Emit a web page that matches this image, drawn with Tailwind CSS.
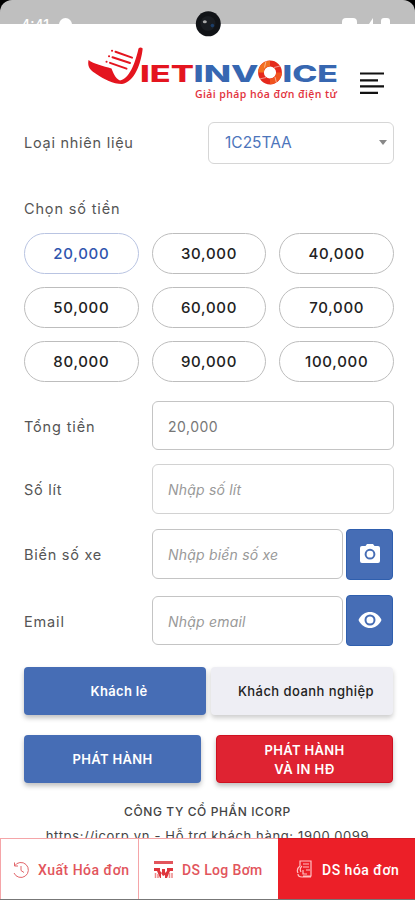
<!DOCTYPE html>
<html lang="vi">
<head>
<meta charset="utf-8">
<meta name="viewport" content="width=device-width, initial-scale=1">
<title>VietInvoice</title>
<script src="https://cdn.jsdelivr.net/npm/@tailwindcss/browser@4"></script>
</head>
<body class="bg-white">
<div class="relative flex h-[900px] w-[415px] flex-col overflow-hidden bg-white font-['Inter','Noto_Sans',sans-serif] text-[14.500px] text-[#555]">
  <!-- status bar -->
  <div class="h-[24px] shrink-0 bg-black">
    <div class="flex h-[24px] items-start justify-between overflow-hidden rounded-t-[12px] bg-[#bfbfbf] pt-[17px] pr-[25px] pl-[21px] text-[14px] leading-[16px] font-medium text-white">
      <div class="flex gap-[10px]"><span>4:41</span><span class="mt-[1px] h-[13px] w-[13px] rounded-full bg-white"></span></div>
      <div class="flex gap-[8px]">
        <span class="mt-[1px] h-[12px] w-[15px] rounded-[4px] bg-white"></span>
        <svg class="mt-[1px] h-[12px] w-[8px]" viewBox="0 0 8 12"><path d="M8 0V12H0z" fill="#fff"/></svg>
        <span class="mt-[1px] h-[12px] w-[9px] rounded-[3px] bg-white"></span>
      </div>
    </div>
  </div>
  <svg class="absolute top-[11px] left-[195px] h-[26px] w-[26px]" viewBox="0 0 26 26"><circle cx="13.3" cy="12.8" r="12.5" fill="#111317"/><circle cx="13" cy="12.5" r="7.5" fill="#1a1d22"/><ellipse cx="9.8" cy="10.8" rx="2" ry="1.5" fill="#aaa"/><circle cx="17.4" cy="14.6" r="1.8" fill="#1c3d68"/></svg>

  <!-- header -->
  <header class="flex h-[98px] shrink-0 pt-[20px] pl-[84px]">
    <svg class="h-[62px] w-[258px] shrink-0" viewBox="84 44 258 62">
      <path d="M88.500 60C94 64 103 66 111.500 68.500C113 72 115 78.500 120 80.500C129 79 135 64 138.500 48.500Q140.500 46.500 142.700 48.500C141 64 134.500 82 122 84C113 84 104 79 97 74.500C91 70.500 87 68 88.500 60Z" fill="#e4151f"/>
      <path d="M90 63L110 69.500L116 81L106 78L94 70Z" fill="#e4151f"/>
      <g stroke="#e4151f" stroke-width="2" stroke-linecap="round" fill="none"><path d="M112 50.800l.1 0M115.500 51.800L132 57.600M109 56.300l.1 0M112.500 57.300L130 63M106.500 61.800l.1 0M110 62.900L126.500 68.600"/></g>
      <g font-family="Inter, sans-serif" font-weight="800" font-size="22.500">
        <text x="140" y="82" textLength="54" lengthAdjust="spacingAndGlyphs" fill="#e4151f">IET</text>
        <text x="193.500" y="82" textLength="65" lengthAdjust="spacingAndGlyphs" fill="#3767b1">INV</text>
        <text x="282.500" y="82" textLength="55.500" lengthAdjust="spacingAndGlyphs" fill="#3767b1">ICE</text>
      </g>
      <circle cx="270" cy="72.500" r="9" fill="none" stroke="#e5281c" stroke-width="5.800"/>
      <path d="M261 72.500A9 9 0 0 1 270 63.500" fill="none" stroke="#f2701f" stroke-width="5.600"/>
      <path d="M279 72.500A9 9 0 0 1 270 81.500" fill="none" stroke="#f0541e" stroke-width="5.600"/>
      <path d="M266 61L264.500 67.500M280 66L274 67.500M276.500 83L275 77M259.500 79L266 77.500" stroke="#fff" stroke-width=".5"/>
      <text x="195" y="98" textLength="142" font-family="Open Sans, sans-serif" font-weight="600" font-size="10.500" fill="#e2323d">Giải pháp hóa đơn điện tử</text>
    </svg>
    <svg class="mt-[27px] ml-[18px] h-[24px] w-[25px]" viewBox="360 71 25 24"><path d="M360 73.500h24M360 80.300h18M360 86.300h24M360 92.800h18" stroke="#111" stroke-width="2.200"/></svg>
  </header>

  <main class="flex shrink-0 flex-col px-[24px]">
    <div class="flex h-[41px] items-center justify-between">
      <span class="pt-[1px] tracking-[0.740px]">Loại nhiên liệu</span>
      <div class="-mr-[3px] flex h-[42px] w-[186px] items-center justify-between rounded-[6px] border border-[#d6d6d6] pr-[6px] pl-[16px]">
        <span class="text-[15.500px] text-[#4d75bb]">1C25TAA</span>
        <svg class="h-[5px] w-[8px]" viewBox="0 0 8 5"><path d="M0 0h8L4 5z" fill="#888"/></svg>
      </div>
    </div>
    <div class="mt-[36px] h-[20px] leading-[20px] tracking-[0.850px]">Chọn số tiền</div>
    <div class="-mr-[3px] mt-[14px] grid grid-cols-3 gap-x-[13px] gap-y-[13px] text-[15px] font-medium tracking-[0.700px] text-[#222]">
      <div class="flex h-[41px] items-center justify-center rounded-full border border-[#b9c4e2] pt-[2px] text-[#2f55ae]">20,000</div>
      <div class="flex h-[41px] items-center justify-center rounded-full border border-[#bdbdbd] pt-[2px]">30,000</div>
      <div class="flex h-[41px] items-center justify-center rounded-full border border-[#bdbdbd] pt-[2px]">40,000</div>
      <div class="flex h-[41px] items-center justify-center rounded-full border border-[#bdbdbd] pt-[2px]">50,000</div>
      <div class="flex h-[41px] items-center justify-center rounded-full border border-[#bdbdbd] pt-[2px]">60,000</div>
      <div class="flex h-[41px] items-center justify-center rounded-full border border-[#bdbdbd] pt-[2px]">70,000</div>
      <div class="flex h-[41px] items-center justify-center rounded-full border border-[#bdbdbd] pt-[2px]">80,000</div>
      <div class="flex h-[41px] items-center justify-center rounded-full border border-[#bdbdbd] pt-[2px]">90,000</div>
      <div class="flex h-[41px] items-center justify-center rounded-full border border-[#bdbdbd] pt-[2px]">100,000</div>
    </div>

    <div class="-mr-[3px] mt-[19px] flex h-[49px] items-center">
      <span class="w-[128px] pt-[2px] tracking-[0.850px]">Tổng tiền</span>
      <div class="flex h-[49px] flex-1 items-center rounded-[6px] border border-[#c4c4c4] pt-[1px] pl-[15px] text-[14px] tracking-[0.500px] text-[#777]">20,000</div>
    </div>
    <div class="-mr-[3px] mt-[14px] flex h-[50px] items-center">
      <span class="w-[128px] pt-[2px] tracking-[0.750px]">Số lít</span>
      <div class="flex h-[50px] flex-1 items-center rounded-[6px] border border-[#d2d2d2] pt-[1px] pl-[15px] text-[14px] tracking-[0.200px] text-[#999] italic">Nhập số lít</div>
    </div>
    <div class="-mr-[3px] mt-[14px] flex h-[52px] items-center">
      <span class="w-[128px] pt-[2px] tracking-[0.750px]">Biển số xe</span>
      <div class="flex h-[50px] w-[191px] items-center rounded-[6px] border border-[#c4c4c4] pt-[1px] pl-[15px] text-[14px] tracking-[0.200px] text-[#999] italic">Nhập biển số xe</div>
      <div class="ml-[3px] flex h-[51px] w-[47px] items-center justify-center rounded-[4px] border border-[#2f5fae] bg-[#466db5] pb-[2px]">
        <svg class="h-[21px] w-[22px]" viewBox="0 0 22 21"><path d="M3 3h3.500L8 1h6l1.500 2H19q2 0 2 2v13q0 2-2 2H3q-2 0-2-2V5q0-2 2-2z" fill="#fff"/><circle cx="11" cy="11.200" r="4.400" fill="none" stroke="#466db5" stroke-width="2"/></svg>
      </div>
    </div>
    <div class="-mr-[3px] mt-[14px] flex h-[53px] items-center">
      <span class="w-[128px] pt-[2px] tracking-[0.850px]">Email</span>
      <div class="flex h-[49px] w-[191px] items-center rounded-[6px] border border-[#c4c4c4] pt-[2px] pl-[15px] text-[14px] tracking-[0.200px] text-[#999] italic">Nhập email</div>
      <div class="ml-[3px] flex h-[51px] w-[47px] items-center justify-center rounded-[4px] border border-[#2f5fae] bg-[#466db5] pb-[1px]">
        <svg class="h-[18px] w-[24px]" viewBox="0 0 24 18"><path d="M.5 9C3 3.500 7.500 1 12 1s9 2.500 11.500 8C21 14.500 16.500 17 12 17S3 14.500.5 9z" fill="#fff"/><circle cx="12" cy="9" r="4.500" fill="none" stroke="#466db5" stroke-width="2"/></svg>
      </div>
    </div>

    <div class="-mr-[2px] mt-[20px] flex gap-[5px] text-[13px] font-semibold">
      <div class="flex h-[48px] w-[182px] items-center justify-center rounded-[4px] bg-[#466db5] pt-[2px] pl-[8px] tracking-[0.300px] text-white shadow-[0_3px_5px_rgba(0,0,0,0.250)]">Khách lẻ</div>
      <div class="flex h-[48px] w-[182px] items-center justify-center rounded-[4px] bg-[#eeeef4] pt-[2px] pl-[8px] font-medium tracking-[0.450px] text-[#222] shadow-[0_3px_5px_rgba(0,0,0,0.200)]">Khách doanh nghiệp</div>
    </div>
    <div class="-mr-[2px] mt-[20px] flex gap-[15px] text-center text-[13px] leading-[19px] font-semibold tracking-[0.350px] text-white">
      <div class="flex h-[48px] w-[177px] items-center justify-center rounded-[4px] bg-[#466db5] pt-[1px] shadow-[0_3px_5px_rgba(0,0,0,0.250)]">PHÁT HÀNH</div>
      <div class="flex h-[48px] w-[177px] items-center justify-center rounded-[4px] border border-[#cf1020] bg-[#df2332] pt-[1px] shadow-[0_3px_5px_rgba(0,0,0,0.250)]">PHÁT HÀNH<br>VÀ IN HĐ</div>
    </div>
    <div class="mt-[17px] text-center text-[12px] leading-[24px] text-[#444]">
      <div class="font-medium tracking-[0.600px]">CÔNG TY CỔ PHẦN ICORP</div>
      <div class="-mx-[10px] text-[13px] whitespace-nowrap tracking-[0.650px]">https://icorp.vn - Hỗ trợ khách hàng: 1900.0099</div>
    </div>
  </main>

  <!-- bottom navigation -->
  <nav class="absolute inset-x-0 bottom-0 flex h-[62px] border-b border-[#777] bg-white font-['Roboto',sans-serif] text-[14px] font-medium text-[#e2555c]">
    <div class="flex w-[139px] items-center border border-b-0 border-[#f5a5a8] pt-[2px] pl-[11px]">
      <svg class="h-[18px] w-[18px]" viewBox="0 0 18 18" fill="none" stroke="#e2666b" stroke-width="1"><path d="M2.500 5A7.500 7.500 0 1 1 2 12M2.500 1.500V5H6M9 5v4.500l3 2"/></svg>
      <span class="ml-[8px] pt-[1px] tracking-[0.500px] whitespace-nowrap">Xuất Hóa đơn</span>
    </div>
    <div class="flex w-[139px] items-center border-t border-[#f5a5a8] pt-[2px] pl-[15px]">
      <svg class="h-[18px] w-[20px]" viewBox="0 0 20 18"><path d="M0 0h19v3H0z" fill="#e2555c"/><path d="M0 7h6v3l2 2V8h3v4l2-2V7h6v3h-3l-3 7h-2v-3l-2 1-2-3v5H6l-3-7H0z" fill="#df353d"/><path d="M1.500 12v5M4 13v4M15.500 12v5M18 12v5" stroke="#e88" stroke-width="1.500"/></svg>
      <span class="ml-[8px] pt-[1px] tracking-[0.350px] whitespace-nowrap">DS Log Bơm</span>
    </div>
    <div class="flex flex-1 items-center border-t border-[#d91922] bg-[#ec1f28] pt-[1px] pl-[18px] text-white">
      <svg class="h-[19px] w-[17px]" viewBox="0 0 17 19" fill="none" stroke="#ffc1c3" stroke-width="1.200"><path d="M4 6V1h11v15H7M7 4h6M7 7h6M10 10h4M4 6Q0 9 2 13M6 6Q3 9 5 12M2 14q0 3 4 3h9M7 10v4h4"/></svg>
      <span class="ml-[9px] pt-[2px] tracking-[0.500px] whitespace-nowrap">DS hóa đơn</span>
    </div>
  </nav>
</div>
</body>
</html>
